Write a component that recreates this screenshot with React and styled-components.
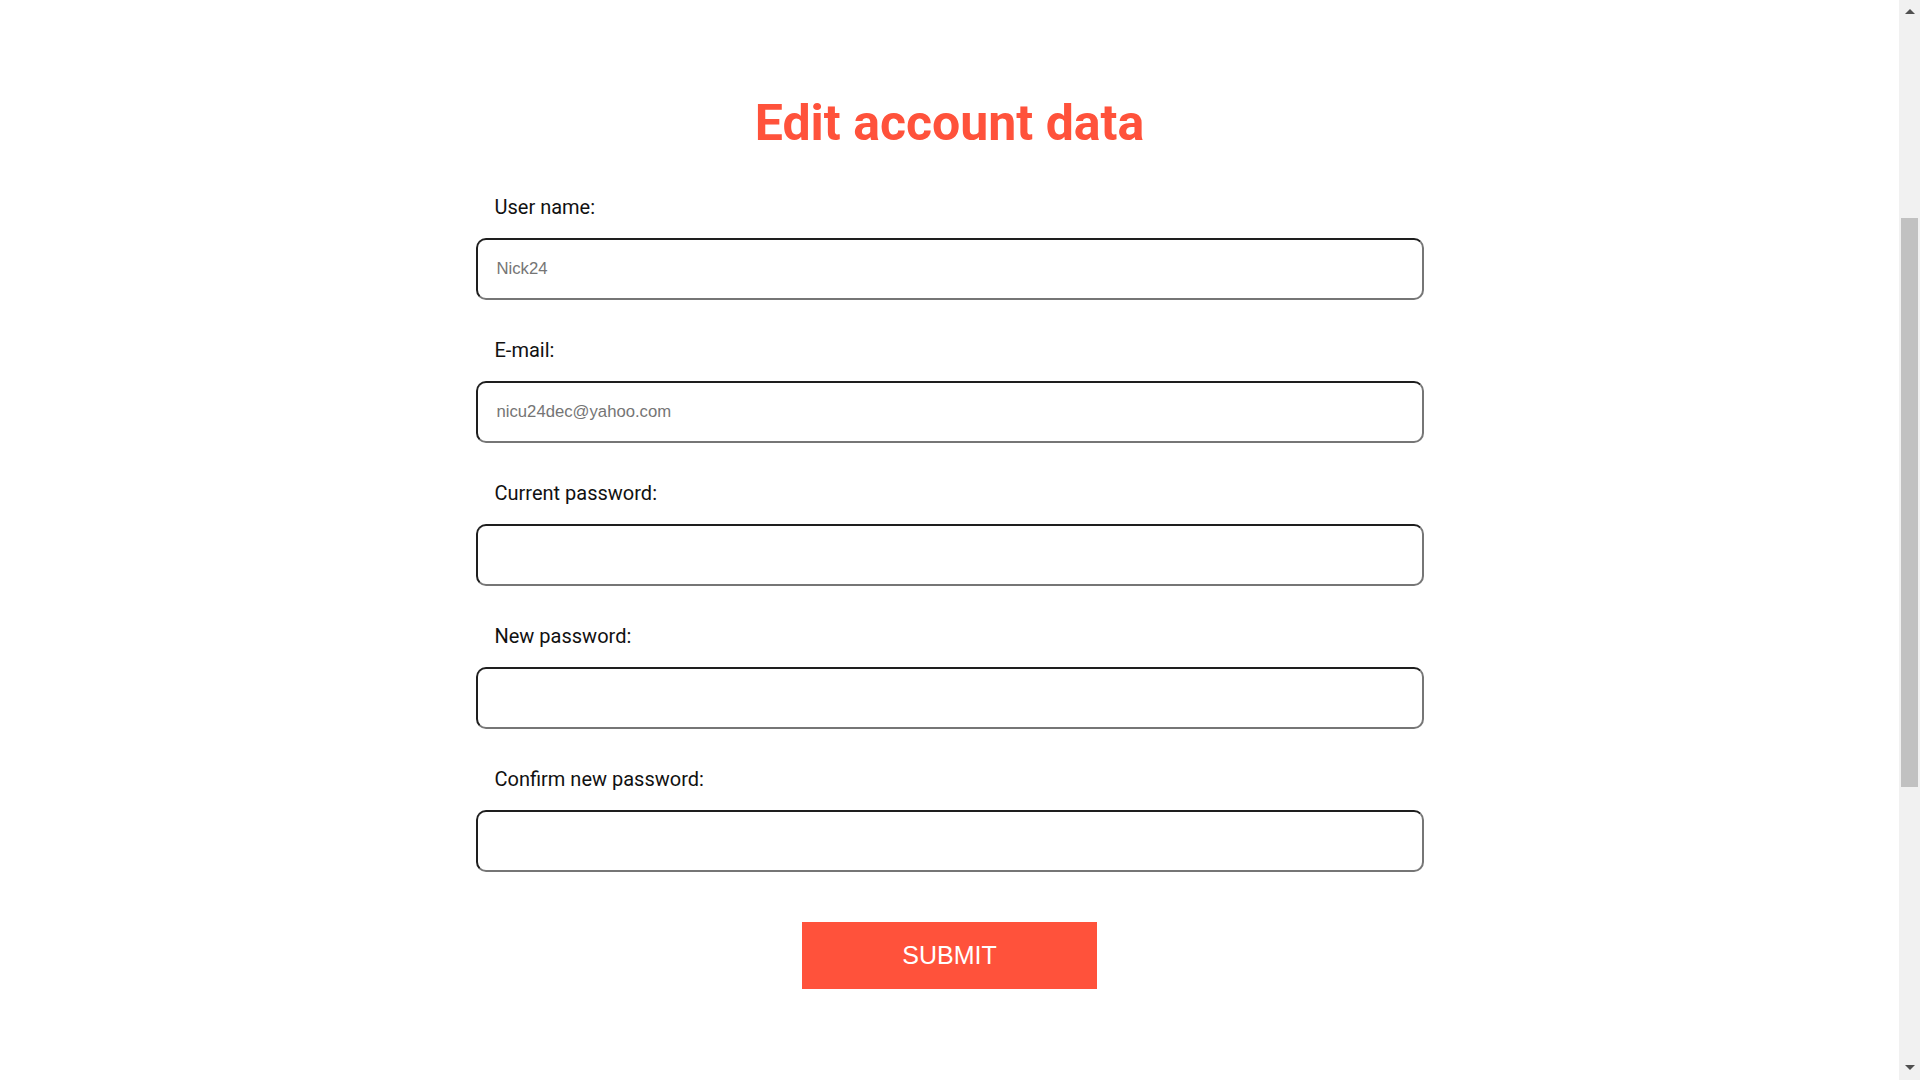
import React from 'react';
import styled, { createGlobalStyle } from 'styled-components';

const GlobalStyle = createGlobalStyle`
  html, body {
    margin: 0;
    padding: 0;
    background: #ffffff;
    overflow: hidden;
  }
  body {
    font-family: Roboto, "Liberation Sans", Arial, sans-serif;
  }
`;

const Page = styled.div`
  height: 100vh;
  display: flex;
  justify-content: center;
  padding: 94px 21px 0 0;
  box-sizing: border-box;
`;

const FormBox = styled.form`
  width: 948px;
  display: flex;
  flex-direction: column;
`;

const Title = styled.h1`
  margin: 0 0 42px;
  font-family: Roboto, sans-serif;
  font-weight: 700;
  font-size: 50px;
  line-height: 59px;
  color: #ff523b;
  text-align: center;
`;

const Field = styled.div`
  display: flex;
  flex-direction: column;
  margin-bottom: 38px;
`;

const Label = styled.label`
  font-family: Roboto, sans-serif;
  font-size: 20px;
  line-height: 24px;
  color: #111111;
  padding-left: 19px;
  margin-bottom: 19px;
`;

const Input = styled.input`
  height: 62px;
  box-sizing: border-box;
  border: 2px solid;
  border-color: #1e1e1e #767676 #767676 #1e1e1e;
  border-radius: 10px;
  padding: 0 19px;
  font-family: "Liberation Sans", Arial, sans-serif;
  font-size: 16.7px;
  color: #222;
  outline: none;
  background: #fff;

  &::placeholder {
    color: #757575;
  }
`;

const Submit = styled.button`
  align-self: center;
  margin-top: 12px;
  width: 295px;
  height: 67px;
  border: none;
  background: #ff523b;
  color: #ffffff;
  font-family: "Liberation Sans", Arial, sans-serif;
  font-size: 25px;
  cursor: pointer;
`;

/* browser scrollbar as seen in the capture */
const ScrollRail = styled.div`
  position: fixed;
  top: 0;
  right: 0;
  width: 21px;
  height: 100vh;
  background: #f1f1f1;
  display: flex;
  flex-direction: column;
`;

const ScrollButton = styled.div`
  height: 21px;
  flex: 0 0 21px;
  display: flex;
  justify-content: center;
  align-items: ${(p) => (p.$down ? 'flex-start' : 'flex-end')};
  padding: ${(p) => (p.$down ? '6px 0 0' : '0 0 7px')};
  box-sizing: border-box;

  &::before {
    content: '';
    width: 0;
    height: 0;
    border-left: 5px solid transparent;
    border-right: 5px solid transparent;
    ${(p) =>
      p.$down ? 'border-top: 5px solid #505050;' : 'border-bottom: 5px solid #505050;'}
  }
`;

const ScrollTrack = styled.div`
  flex: 1;
  padding: 197px 2px 0;
`;

const ScrollThumb = styled.div`
  height: 569px;
  background: #c1c1c1;
`;

const fields = [
  { id: 'username', label: 'User name:', type: 'text', placeholder: 'Nick24' },
  { id: 'email', label: 'E-mail:', type: 'email', placeholder: 'nicu24dec@yahoo.com' },
  { id: 'current', label: 'Current password:', type: 'password', placeholder: '' },
  { id: 'newpass', label: 'New password:', type: 'password', placeholder: '' },
  { id: 'confirm', label: 'Confirm new password:', type: 'password', placeholder: '' },
];

function App() {
  return (
    <>
      <GlobalStyle />
      <Page>
        <FormBox onSubmit={(e) => e.preventDefault()}>
          <Title>Edit account data</Title>
          {fields.map((f) => (
            <Field key={f.id}>
              <Label htmlFor={f.id}>{f.label}</Label>
              <Input id={f.id} type={f.type} placeholder={f.placeholder} />
            </Field>
          ))}
          <Submit type="submit">SUBMIT</Submit>
        </FormBox>
      </Page>
      <ScrollRail>
        <ScrollButton />
        <ScrollTrack>
          <ScrollThumb />
        </ScrollTrack>
        <ScrollButton $down />
      </ScrollRail>
    </>
  );
}

export default App;
